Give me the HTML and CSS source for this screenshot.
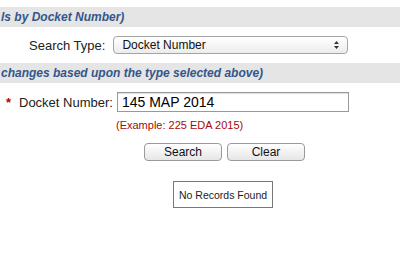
FILE: index.html
```html
<!DOCTYPE html>
<html lang="en">
  <head>
    <meta charset="UTF-8" />
    <meta name="viewport" content="width=device-width, initial-scale=1.0" />
    <title>Docket Search</title>
    <link rel="stylesheet" href="styles.css">
  </head>
  <body>
    <div class="bar"><span class="bar-text">ls by Docket Number)</span></div>

    <div class="row type-row">
      <label class="label" for="type">Search Type:</label>
      <div class="select">
        <span>Docket Number</span>
        <svg class="arrows" width="7" height="10" viewBox="0 0 7 10">
          <path d="M3.5 1 L6 4 L1 4 Z M3.5 9 L6 6 L1 6 Z" fill="#333" />
        </svg>
      </div>
    </div>

    <div class="bar"><span class="bar-text">changes based upon the type selected above)</span></div>

    <div class="row docket-row">
      <span class="req">*</span>
      <label class="label" for="docket">Docket Number:</label>
      <input class="text-input" id="docket" type="text" value="145 MAP 2014" />
    </div>
    <div class="example">(Example: 225 EDA 2015)</div>

    <div class="buttons">
      <button class="btn">Search</button>
      <button class="btn">Clear</button>
    </div>

    <div class="results">
      <div class="no-records">No Records Found</div>
    </div>
  </body>
</html>
```

FILE: styles.css
```css
body {
  margin: 0;
  padding-top: 7px;
  font-family: "Liberation Sans", Arial, sans-serif;
  color: #222;
  background: #fff;
  overflow: hidden;
}

.bar {
  height: 20px;
  background: #e5e5e5;
  display: flex;
  align-items: center;
  overflow: hidden;
}

.bar-text {
  font-size: 12px;
  font-weight: bold;
  font-style: italic;
  color: #34578a;
  white-space: nowrap;
  padding-left: 1px;
}

.row {
  display: flex;
  align-items: center;
}

.label {
  font-size: 13px;
  color: #222;
}

.type-row {
  height: 36px;
  padding-left: 29px;
}

.select {
  margin-left: 8px;
  width: 218px;
  height: 16px;
  border: 1px solid #a5a5a5;
  border-radius: 4px;
  background: linear-gradient(#fff, #ececec);
  display: flex;
  align-items: center;
  justify-content: space-between;
  padding: 0 7px 0 8px;
  font-size: 12px;
  color: #111;
}

.docket-row {
  margin-top: 9px;
  padding-left: 6px;
}

.req {
  color: #b00;
  font-size: 13px;
  font-weight: bold;
  width: 13px;
}

.text-input {
  margin-left: 4px;
  width: 222px;
  height: 18px;
  border: 1px solid #999;
  padding: 0 4px;
  font-family: "Liberation Sans", Arial, sans-serif;
  font-size: 14px;
  color: #000;
  box-shadow: inset 0 1px 1px #ddd;
}

.example {
  margin: 7px 0 0 116px;
  font-size: 11px;
  color: #a50a0a;
}

.buttons {
  display: flex;
  gap: 5px;
  margin: 12px 0 0 144px;
}

.btn {
  width: 78px;
  height: 18px;
  border: 1px solid #9a9a9a;
  border-radius: 4px;
  background: linear-gradient(#fff, #e6e6e6);
  font-family: "Liberation Sans", Arial, sans-serif;
  font-size: 12px;
  color: #111;
  padding: 0;
}

.results {
  display: flex;
  margin: 20px 0 0 173px;
}

.no-records {
  border: 1px solid #777;
  padding: 0 5px;
  height: 25px;
  display: flex;
  align-items: center;
  font-size: 10.5px;
  color: #222;
}
```
